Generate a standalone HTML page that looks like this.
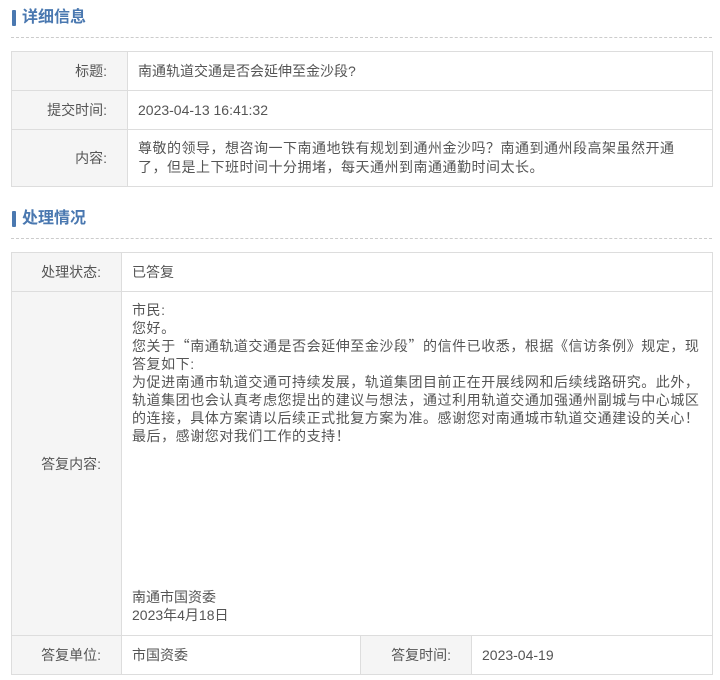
<!DOCTYPE html>
<html><head><meta charset="utf-8"><style>
body{margin:0;background:#fff;font-family:"Liberation Sans","Noto Sans CJK SC",sans-serif;font-size:14px;color:#555;}
.h{position:absolute;left:11px;height:20px;font-size:16px;font-weight:bold;color:#4a78b0;line-height:20px;padding-left:11px;}
.h:before{content:"";position:absolute;left:1px;top:2px;width:4px;height:16px;background:#4a78b0;border-radius:1px;}
.d{position:absolute;left:11px;width:701px;border-top:1px dashed #ccc;}
table{position:absolute;left:11px;width:702px;border-collapse:collapse;table-layout:fixed;}
td{border:1px solid #ddd;padding:0 10px;vertical-align:middle;white-space:nowrap;}
td.l{background:#f5f5f5;text-align:right;padding-right:20px;}
.q{font-family:"Noto Sans CJK SC",sans-serif;}
</style></head><body>
<div class="h" style="top:8px">详细信息</div>
<div class="d" style="top:37px"></div>
<table style="top:51px">
<colgroup><col style="width:116px"><col></colgroup>
<tr style="height:39px"><td class="l">标题:</td><td>南通轨道交通是否会延伸至金沙段?</td></tr>
<tr style="height:39px"><td class="l">提交时间:</td><td>2023-04-13 16:41:32</td></tr>
<tr style="height:57px"><td class="l">内容:</td><td style="line-height:19px;letter-spacing:0.5px">尊敬的领导，想咨询一下南通地铁有规划到通州金沙吗？南通到通州段高架虽然开通<br>了，但是上下班时间十分拥堵，每天通州到南通通勤时间太长。</td></tr>
</table>
<div class="h" style="top:209px">处理情况</div>
<div class="d" style="top:238px"></div>
<table style="top:252px">
<colgroup><col style="width:110px"><col style="width:239px"><col style="width:111px"><col></colgroup>
<tr style="height:39px"><td class="l">处理状态:</td><td colspan="3">已答复</td></tr>
<tr style="height:343px"><td class="l">答复内容:</td><td colspan="3" style="line-height:18px;vertical-align:top;padding-top:9px;height:334px;position:relative;letter-spacing:0.55px">市民:<br>您好。<br>您关于<span class="q">“</span>南通轨道交通是否会延伸至金沙段<span class="q">”</span>的信件已收悉，根据《信访条例》规定，现<br>答复如下:<br>为促进南通市轨道交通可持续发展，轨道集团目前正在开展线网和后续线路研究。此外，<br>轨道集团也会认真考虑您提出的建议与想法，通过利用轨道交通加强通州副城与中心城区<br>的连接，具体方案请以后续正式批复方案为准。感谢您对南通城市轨道交通建设的关心！<br>最后，感谢您对我们工作的支持！<div style="position:absolute;left:10px;top:296px;letter-spacing:0">南通市国资委<br>2023年4月18日</div></td></tr>
<tr style="height:39px"><td class="l">答复单位:</td><td>市国资委</td><td class="l">答复时间:</td><td>2023-04-19</td></tr>
</table>
</body></html>
